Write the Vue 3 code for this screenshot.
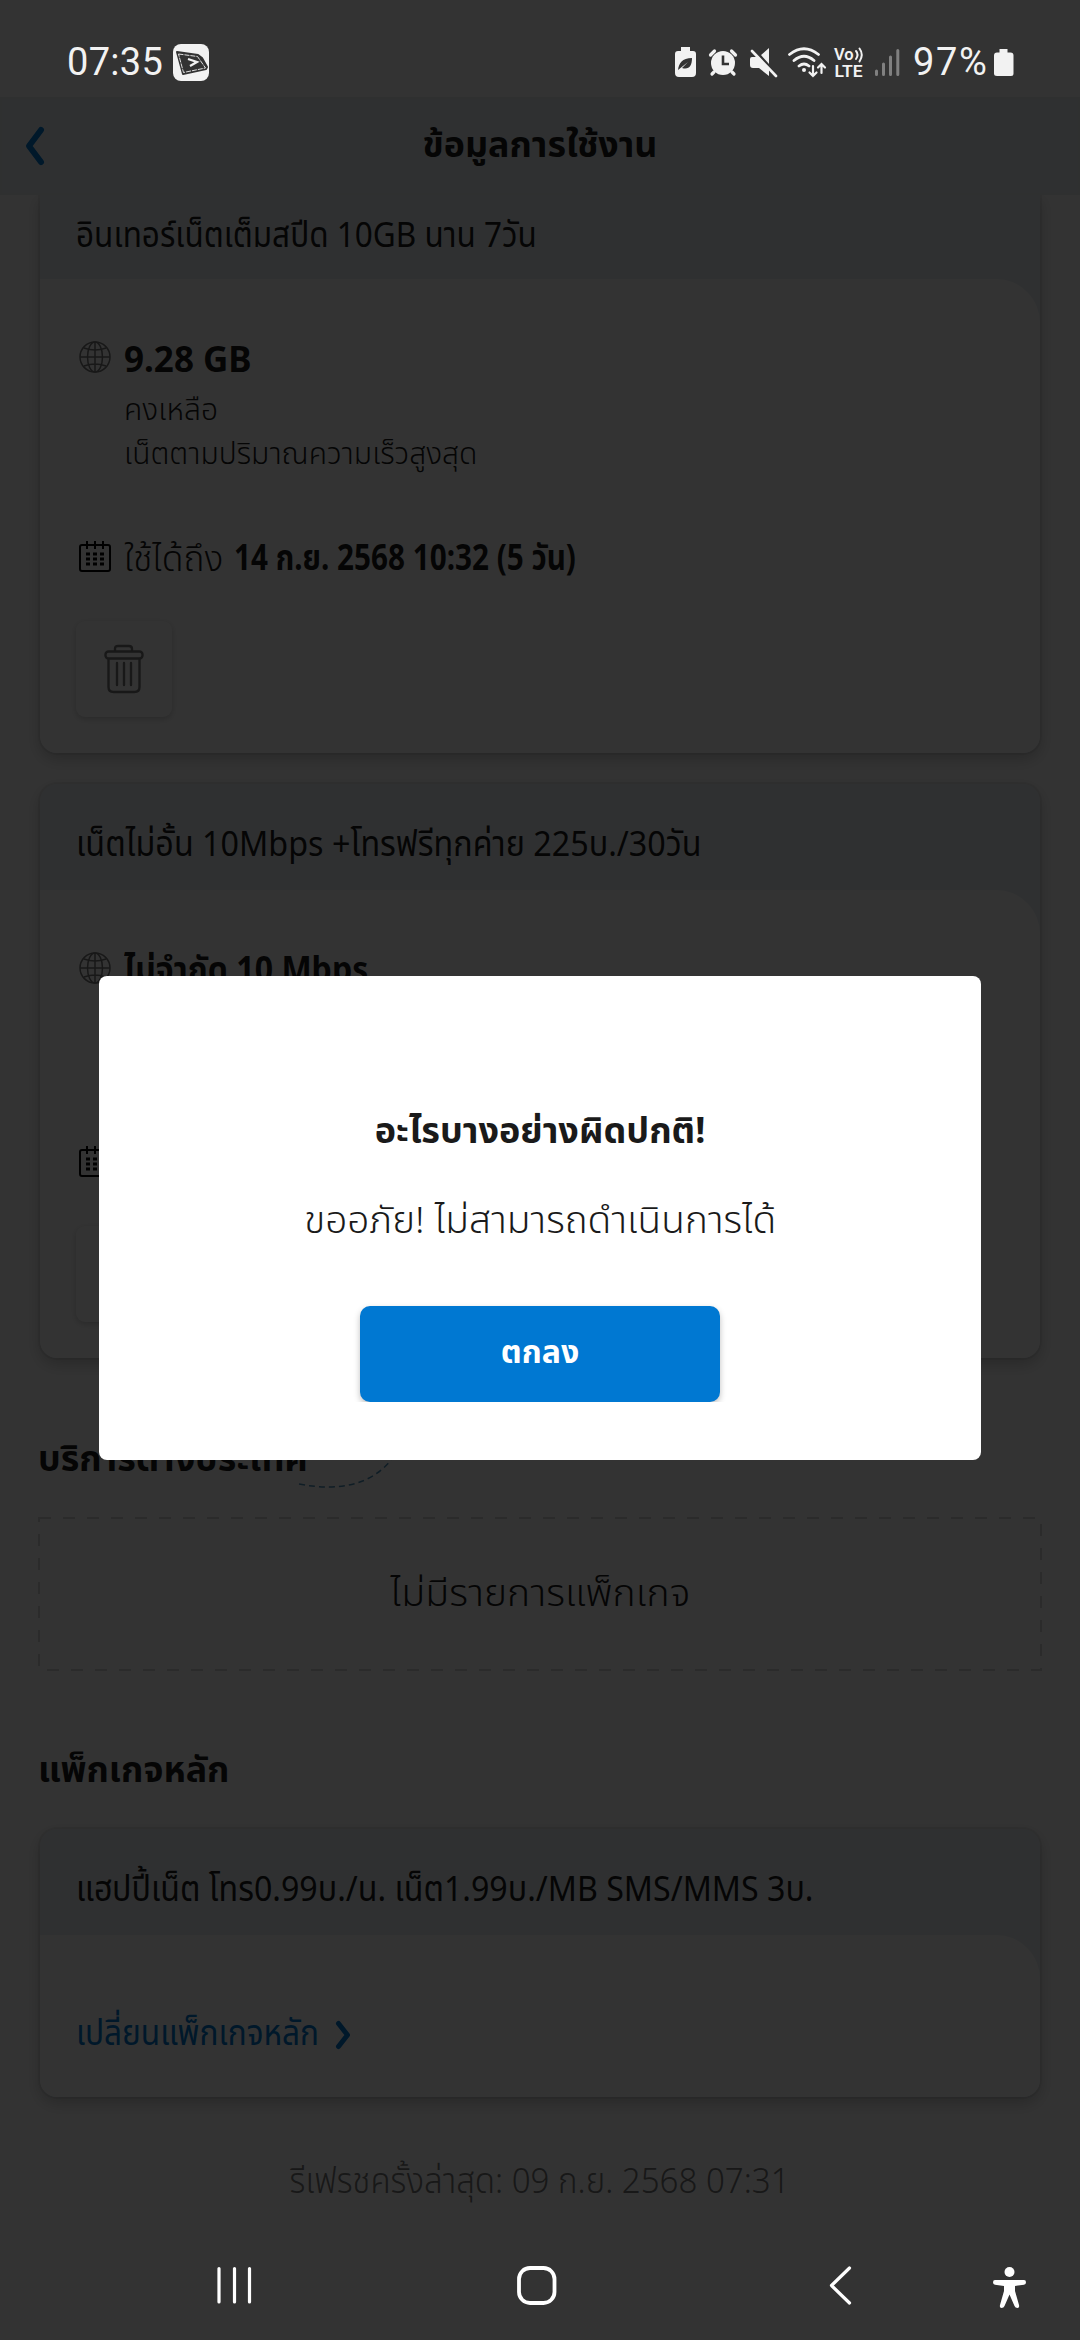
<script setup>
const cards = [
  {
    id: 'speed',
    title: 'อินเทอร์เน็ตเต็มสปีด 10GB นาน 7วัน',
    titleClass: 't-speed',
    amount: '9.28 GB',
    lines: ['คงเหลือ', 'เน็ตตามปริมาณความเร็วสูงสุด'],
    untilLabel: 'ใช้ได้ถึง',
    until: '14 ก.ย. 2568 10:32 (5 วัน)',
  },
  {
    id: 'unlimited',
    title: 'เน็ตไม่อั้น 10Mbps +โทรฟรีทุกค่าย 225บ./30วัน',
    titleClass: 't-unlimited',
    amount: 'ไม่จำกัด 10 Mbps',
    lines: [],
    untilLabel: '',
    until: '',
  },
]
</script>

<template>
  <div class="screen">
    <div class="statusbar">
      <span class="clock">07:35</span>
      <svg class="app-badge" width="36" height="37" viewBox="0 0 36 37">
        <rect width="36" height="37" rx="8" fill="#f2f2f2" />
        <path d="M4 8l21 3 4 3 5 9-1 2-23 5z" fill="#333" stroke="#333" stroke-width="2" stroke-linejoin="round" />
        <path d="M5.500 10l19 2.500 8 11.500-22 4.500z" fill="none" stroke="#f2f2f2" stroke-width=".9" stroke-dasharray="5 1" />
        <path d="M15 15l9 3-7 4" fill="none" stroke="#f2f2f2" stroke-width="2.200" />
      </svg>
      <svg class="sys" width="240" height="40" viewBox="670 42 240 40">
        <g fill="#f2f2f2">
          <path d="M681 47h9v4h3q3 0 3 3v19q0 4-4 4h-13q-4 0-4-4V54q0-3 3-3h3z" />
          <path d="M678 70c1-7 4-12 14-12 0 8-3 12-10 10l6-6-10 8z" fill="#333" />
          <circle cx="723" cy="63" r="12" />
          <path d="M710.500 55l4-4M735.500 55l-4-4M714 72l-2 2M732 72l2 2" stroke="#f2f2f2" stroke-width="3.200" stroke-linecap="round" />
          <path d="M723 55.500v8.500h6" fill="none" stroke="#333" stroke-width="2.600" />
          <path d="M761 55l8-7v16zM750 59q0-2 2-2h5l12 12v7l-10-8h-6q-3 0-3-3z" />
          <path d="M752 51l24 25" stroke="#f2f2f2" stroke-width="2.600" stroke-linecap="round" />
          <circle cx="804" cy="70" r="2" />
        </g>
        <g fill="none" stroke="#f2f2f2" stroke-width="2.800" stroke-linecap="round">
          <path d="M789.500 54.500q14.500-11.500 29 0M794 60.500q10-8.500 20 0M799 66q5-4 10 0" />
          <path d="M813 66v10M809.500 72.500l3.500 3.500 3.500-3.500M821.500 73V64M818 67.500l3.500-3.500 3.500 3.500" stroke-width="2.200" />
          <path d="M856 51q3 3.500 0 8M859.500 48.500q4.500 6 0 13" stroke-width="2" />
        </g>
        <g fill="#f2f2f2" font-family="Roboto, sans-serif" font-weight="600">
          <text x="834" y="60" font-size="16.500">Vo</text>
          <text x="834.500" y="76.500" font-size="17" textLength="28" lengthAdjust="spacingAndGlyphs">LTE</text>
        </g>
        <path d="M876.500 71v3.500M883.500 64v10.500M890.500 57v17.500M897.800 50.500v24" stroke="#808080" stroke-width="3" stroke-linecap="round" />
      </svg>
      <span class="percent">97%</span>
      <svg class="battery" width="20" height="28" viewBox="0 0 20 28">
        <path d="M5.500 0h8v3.500h3q3 0 3 3v18q0 2.500-2.500 2.500H3q-3 0-3-2.500v-18q0-3 3-3h2.500z" fill="#f2f2f2" />
      </svg>
    </div>

    <header class="topbar">
      <svg class="back" width="22" height="42" viewBox="0 0 22 42"><path d="M17 5L5 21l12 16" /></svg>
      <h1>ข้อมูลการใช้งาน</h1>
    </header>

    <main>
      <section v-for="card in cards" :key="card.id" class="card" :class="card.id">
        <div class="card-head"><span class="narrow" :class="card.titleClass">{{ card.title }}</span></div>
        <div class="card-body">
          <div class="row">
            <svg class="ico globe" width="32" height="32" viewBox="0 0 32 32">
              <circle cx="16" cy="16" r="15" /><ellipse cx="16" cy="16" rx="7.500" ry="15" />
              <path d="M16 1v30M1 16h30M5 7q11 4 22 0M5 25q11-4 22 0" />
            </svg>
            <b class="amount">{{ card.amount }}</b>
          </div>
          <div class="lines">
            <p v-for="line in card.lines" :key="line">{{ line }}</p>
          </div>
          <div class="row until">
            <svg class="ico cal" width="32" height="31" viewBox="0 0 32 31">
              <rect x="1" y="4" width="30" height="26" rx="2" />
              <path d="M8 0v8M16 0v8M24 0v8" />
              <path d="M7 13h18M7 18h18M7 23h18" stroke-width="3" stroke-dasharray="4 3" />
            </svg>
            <span class="until-label">{{ card.untilLabel }}</span>
            <b class="until-date narrow">{{ card.until }}</b>
          </div>
          <button class="trash">
            <svg width="40" height="50" viewBox="0 0 40 50">
              <path d="M11 7V5q0-3 3-3h11q3 0 3 3v2" />
              <rect x="1.500" y="7.500" width="37" height="7" rx="3" />
              <path d="M4.500 15v28q0 5 5 5h21q5 0 5-5V15M13 19v22M20 19v22M27 19v22" />
            </svg>
          </button>
        </div>
      </section>

      <div class="roaming">
        <h2>บริการต่างประเทศ</h2>
        <svg class="arc" width="96" height="30" viewBox="0 0 96 30"><path d="M1 23Q64 35 93 -1" /></svg>
      </div>
      <div class="empty">
        <svg width="1004" height="154"><rect x="1" y="1" width="1002" height="152" /></svg>
        <span>ไม่มีรายการแพ็กเกจ</span>
      </div>

      <h2 class="h-main">แพ็กเกจหลัก</h2>
      <section class="card main-pack">
        <div class="card-head"><span class="narrow t-main">แฮปปี้เน็ต โทร0.99บ./น. เน็ต1.99บ./MB SMS/MMS 3บ.</span></div>
        <div class="card-body">
          <a class="change">
            <span class="narrow">เปลี่ยนแพ็กเกจหลัก</span>
            <svg width="16" height="30" viewBox="0 0 16 30"><path d="M3.500 3.500L12.500 15l-9 11.500" /></svg>
          </a>
        </div>
      </section>
      <p class="refreshed"><span>รีเฟรชครั้งล่าสุด: 09 ก.ย. 2568 07:31</span></p>
    </main>

    <div class="overlay">
      <div class="dialog">
        <h3>อะไรบางอย่างผิดปกติ!</h3>
        <p><span>ขออภัย! ไม่สามารถดำเนินการได้</span></p>
        <div class="action"><button class="ok">ตกลง</button></div>
      </div>
    </div>

    <svg class="navbar" width="1080" height="108" viewBox="0 2232 1080 108">
      <g fill="none" stroke="#fff" stroke-width="3.200" stroke-linecap="round">
        <path d="M219 2268.500v33.500M234.500 2268.500v33.500M249.500 2268.500v33.500" />
        <rect x="519" y="2268" width="35.500" height="35" rx="11" stroke-width="3.800" />
        <path d="M849.500 2268l-18 17.500 18 17.500" stroke-linejoin="round" />
      </g>
      <g fill="#fff">
        <circle cx="1009.500" cy="2272" r="5" />
        <path d="M995 2280h29q2 0 2 2.200t-2 2.500l-9 1.300v5l4 14q.7 3-1.500 3t-3-2l-5-11.500-5 11.500q-.8 2-3 2t-1.500-3l4-14v-5l-9-1.300q-2-.3-2-2.500t2-2.200z" />
      </g>
    </svg>
  </div>
</template>

<style>
body { margin: 0; background: #333; }
</style>

<style scoped>
.screen {
  position: relative;
  width: 1080px;
  height: 2340px;
  overflow: hidden;
  background: #fff;
  color: #1a1a1a;
  font-family: "Noto Sans", "Noto Sans Thai", sans-serif;
  font-size: 35px;
  line-height: 40px;
}
h1, h2, h3, p { margin: 0; }
svg { display: block; flex: none; }
span, b, p, h1, h2, h3, button { white-space: nowrap; }
button { border: 0; padding: 0; font: inherit; }
.narrow { display: inline-block; transform-origin: left center; }

.statusbar {
  position: relative;
  z-index: 2;
  display: flex;
  height: 97px;
}
.clock, .percent {
  padding-top: 42px;
  font-family: Roboto, sans-serif;
  font-size: 38px;
  color: #f2f2f2;
}
.clock { width: 106px; margin-left: 67px; letter-spacing: .3px; }
.app-badge { margin: 44px 0 0; }
.sys { margin: 42px 0 0 461px; }
.percent { width: 81px; margin-left: 3px; letter-spacing: 1.600px; }
.battery { margin-top: 49px; }

.topbar {
  position: relative;
  display: flex;
  align-items: flex-start;
  justify-content: center;
  box-sizing: border-box;
  height: 98px;
  background: #ecf1f5;
  border: 2px solid #e9edf1;
}
.topbar h1 { margin-top: 24px; font-size: 35.800px; }
.back { position: absolute; left: 22px; top: 26px; }
.back path, .change path {
  fill: none;
  stroke: #0078d2;
  stroke-width: 6;
  stroke-linecap: round;
  stroke-linejoin: round;
}

main { padding: 0 40px; }
.card {
  width: 1000px;
  border-radius: 17px;
  background: #ecf1f5;
  box-shadow: 0 0 0 2px rgba(0, 0, 0, .06), 0 6px 16px rgba(0, 0, 0, .22);
}
.card-head { box-sizing: border-box; height: 106px; padding: 39px 36px 0; }
.card-body {
  box-sizing: border-box;
  padding: 59px 36px 36px;
  background: #fff;
  border-radius: 0 44px 17px 17px;
}
.speed { border-radius: 0 0 17px 17px; clip-path: inset(0 -40px -40px -40px); }
.speed .card-head { height: 84px; padding-top: 19px; }
.unlimited { margin-top: 31px; }
.t-speed { transform: scaleX(.9); }
.t-unlimited { transform: scaleX(.923); }
.t-main { transform: scaleX(.919); }
.row { display: flex; height: 40px; }
.ico { margin-left: 3px; width: 32px; margin-right: 13px; fill: none; }
.globe { stroke: #777; stroke-width: 1.500; margin-top: 3px; }
.cal { stroke: #000; stroke-width: 2; margin-top: 6px; }
.amount { transform-origin: left center; margin-top: 1px; }
.unlimited .amount { transform: scaleX(.916); margin-top: 0; }
.lines { padding-top: 9px; height: 87px; font-size: 30px; font-weight: 350; line-height: 44px; padding-left: 48px; }
.until { margin-top: 61px; }
.unlimited .until { margin-top: 55px; }
.until-label, .until-date { margin-top: 2px; }
.until-label { width: 110px; font-weight: 350; font-size: 35.500px; }
.until-date { transform: scaleX(.848); }
.trash {
  display: flex;
  align-items: center;
  justify-content: center;
  width: 96px;
  height: 96px;
  margin-top: 46px;
  border-radius: 9px;
  background: #fff;
  box-shadow: 0 2px 6px rgba(0, 0, 0, .2);
}
.trash svg { fill: none; stroke: #777; stroke-width: 2.400; stroke-linecap: round; }

h2 { margin-left: -2px; font-size: 35.800px; line-height: 48px; }
.roaming { position: relative; margin-top: 75px; }
.arc { position: absolute; left: 258px; top: 28px; overflow: visible; }
.arc path { fill: none; stroke: #4c90b8; stroke-width: 1.500; stroke-dasharray: 6 4; }
.empty {
  position: relative;
  display: flex;
  align-items: center;
  justify-content: center;
  height: 154px;
  margin: 36px -2px 0;
  font-weight: 350;
}
.empty span { margin-bottom: 4px; transform: scaleX(1.060); font-size: 37px; }
.empty svg { position: absolute; left: 0; top: 0; }
.empty rect { fill: none; stroke: #d8d8d8; stroke-width: 2; stroke-dasharray: 12; }
.h-main { margin-top: 73px; }
.main-pack { margin-top: 37px; }
.main-pack .card-body { height: 162px; padding-top: 77px; }
.change { display: flex; color: #0078d2; }
.change span { width: 259px; transform: scaleX(.902); }
.change svg { margin-top: 8px; }
.change path { stroke-width: 5; }
.refreshed { margin-top: 63px; text-align: center; color: #777; font-weight: 350; }
.refreshed span { display: inline-block; transform: scaleX(.945); }

.overlay {
  position: absolute;
  inset: 0;
  z-index: 1;
  display: flex;
  justify-content: center;
  align-items: flex-start;
  padding-top: 976px;
  background: rgba(0, 0, 0, .8);
}
.dialog {
  box-sizing: border-box;
  width: 882px;
  height: 484px;
  padding-top: 130px;
  border-radius: 8px;
  background: #fff;
  text-align: center;
}
.dialog h3 { font-size: 36px; line-height: 48px; }
.dialog p { margin-top: 41px; line-height: 48px; font-size: 37px; font-weight: 350; }
.dialog p span { display: inline-block; transform: scaleX(1.048); }
.action { display: flex; justify-content: center; margin-top: 53px; height: 106px; padding-top: 10px; overflow: hidden; box-sizing: border-box; }
.ok {
  width: 360px;
  height: 96px;
  padding-bottom: 6px;
  border-radius: 10px;
  background: #0078d2;
  color: #fff;
  font-size: 32px;
  font-weight: 700;
  box-shadow: 0 3px 6px rgba(0, 0, 0, .25);
}
.navbar { position: absolute; z-index: 2; left: 0; bottom: 0; }
</style>
